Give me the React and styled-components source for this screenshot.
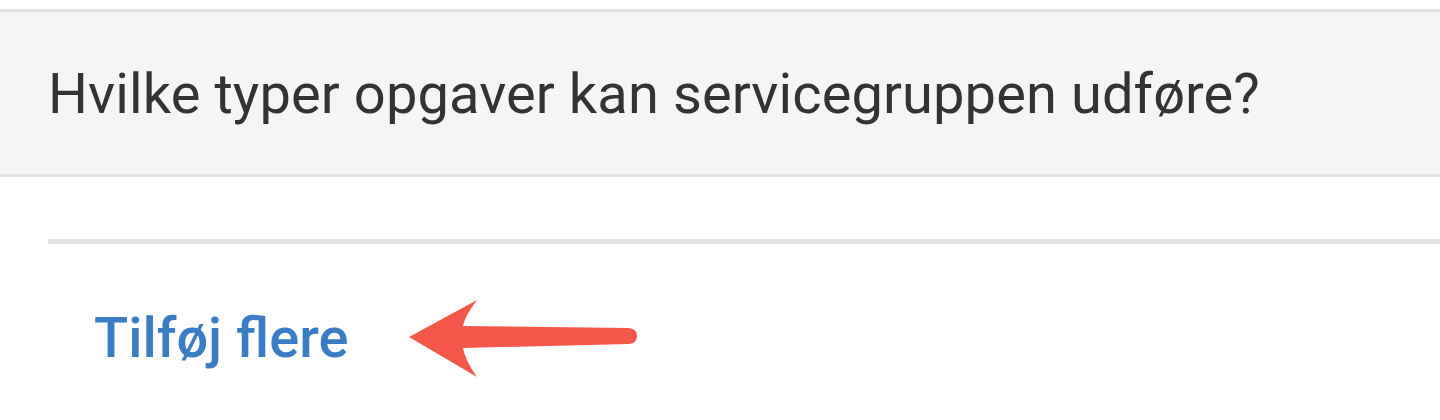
import styled, { createGlobalStyle } from "styled-components";

const GlobalStyle = createGlobalStyle`
  body {
    margin: 0;
    background: #fff;
    font-family: Roboto, "Liberation Sans", Arial, sans-serif;
  }
`;

const Page = styled.div`
  width: 1440px;
  height: 420px;
  overflow: hidden;
  padding-top: 9px;
  box-sizing: border-box;
`;

const QuestionBar = styled.div`
  height: 168px;
  background: #f5f5f5;
  border-top: 3px solid #e3e3e3;
  border-bottom: 3px solid #e3e3e3;
  display: flex;
  align-items: center;
  padding-left: 48px;
  padding-top: 2px;
  box-sizing: border-box;
`;

const Question = styled.h2`
  margin: 0;
  font-size: 56px;
  font-weight: 400;
  color: #333;
  letter-spacing: 0.1px;
`;

const Section = styled.div`
  padding-left: 48px;
  padding-top: 62px;
`;

const Divider = styled.hr`
  margin: 0;
  border: none;
  height: 5px;
  background: #e3e3e3;
`;

const Row = styled.div`
  display: flex;
  align-items: center;
  gap: 58px;
  padding-left: 46px;
  padding-top: 52px;
`;

const AddMore = styled.a`
  font-size: 56px;
  font-weight: 500;
  color: #3a7dc5;
  text-decoration: none;
  cursor: pointer;
`;

const ArrowIcon = styled.svg`
  margin-top: 4px;
`;

const Arrow = () => (
  <ArrowIcon width="230" height="80" viewBox="0 0 230 80">
    <path
      d="M2 37 L70 0 Q58 16 56 26 L222 28 Q230 29 230 36 Q230 43 222 44 L56 48 Q58 60 70 77 Z"
      fill="#f5574a"
    />
  </ArrowIcon>
);

export default function App() {
  return (
    <>
      <GlobalStyle />
      <Page>
        <QuestionBar>
          <Question>Hvilke typer opgaver kan servicegruppen udføre?</Question>
        </QuestionBar>
        <Section>
          <Divider />
          <Row>
            <AddMore>Tilføj flere</AddMore>
            <Arrow />
          </Row>
        </Section>
      </Page>
    </>
  );
}
